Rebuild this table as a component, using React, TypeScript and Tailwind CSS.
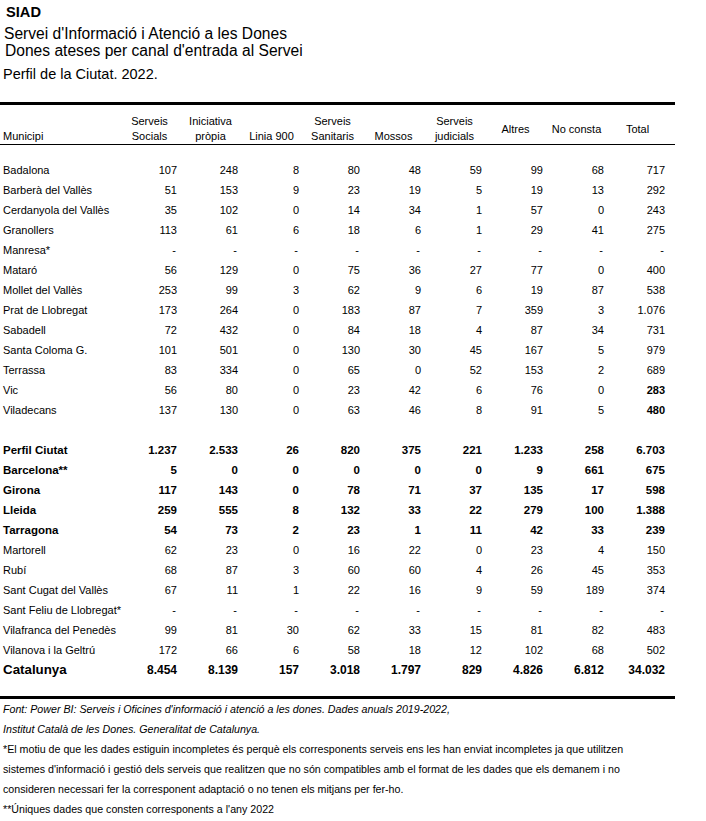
import React from "react";

type Row = { name: string; v: string[]; bold?: boolean; boldTotal?: boolean };

const top: Row[] = [
  { name: "Badalona", v: ["107", "248", "8", "80", "48", "59", "99", "68", "717"] },
  { name: "Barberà del Vallès", v: ["51", "153", "9", "23", "19", "5", "19", "13", "292"] },
  { name: "Cerdanyola del Vallès", v: ["35", "102", "0", "14", "34", "1", "57", "0", "243"] },
  { name: "Granollers", v: ["113", "61", "6", "18", "6", "1", "29", "41", "275"] },
  { name: "Manresa*", v: ["-", "-", "-", "-", "-", "-", "-", "-", "-"] },
  { name: "Mataró", v: ["56", "129", "0", "75", "36", "27", "77", "0", "400"] },
  { name: "Mollet del Vallès", v: ["253", "99", "3", "62", "9", "6", "19", "87", "538"] },
  { name: "Prat de Llobregat", v: ["173", "264", "0", "183", "87", "7", "359", "3", "1.076"] },
  { name: "Sabadell", v: ["72", "432", "0", "84", "18", "4", "87", "34", "731"] },
  { name: "Santa Coloma G.", v: ["101", "501", "0", "130", "30", "45", "167", "5", "979"] },
  { name: "Terrassa", v: ["83", "334", "0", "65", "0", "52", "153", "2", "689"] },
  { name: "Vic", v: ["56", "80", "0", "23", "42", "6", "76", "0", "283"], boldTotal: true },
  { name: "Viladecans", v: ["137", "130", "0", "63", "46", "8", "91", "5", "480"], boldTotal: true },
];

const bottom: Row[] = [
  { name: "Perfil Ciutat", v: ["1.237", "2.533", "26", "820", "375", "221", "1.233", "258", "6.703"], bold: true },
  { name: "Barcelona**", v: ["5", "0", "0", "0", "0", "0", "9", "661", "675"], bold: true },
  { name: "Girona", v: ["117", "143", "0", "78", "71", "37", "135", "17", "598"], bold: true },
  { name: "Lleida", v: ["259", "555", "8", "132", "33", "22", "279", "100", "1.388"], bold: true },
  { name: "Tarragona", v: ["54", "73", "2", "23", "1", "11", "42", "33", "239"], bold: true },
  { name: "Martorell", v: ["62", "23", "0", "16", "22", "0", "23", "4", "150"] },
  { name: "Rubí", v: ["68", "87", "3", "60", "60", "4", "26", "45", "353"] },
  { name: "Sant Cugat del Vallès", v: ["67", "11", "1", "22", "16", "9", "59", "189", "374"] },
  { name: "Sant Feliu de Llobregat*", v: ["-", "-", "-", "-", "-", "-", "-", "-", "-"] },
  { name: "Vilafranca del Penedès", v: ["99", "81", "30", "62", "33", "15", "81", "82", "483"] },
  { name: "Vilanova i la Geltrú", v: ["172", "66", "6", "58", "18", "12", "102", "68", "502"] },
];

const catalunya = ["8.454", "8.139", "157", "3.018", "1.797", "829", "4.826", "6.812", "34.032"];

const GRID = "grid grid-cols-[117px_repeat(9,61px)]";

function DataRow({ r }: { r: Row }) {
  return (
    <div className={`${GRID} h-[20px] leading-[20px] ${r.bold ? "font-bold text-[11.5px]" : "text-[11px]"}`}>
      <div className="pl-[3px] whitespace-nowrap">{r.name}</div>
      {r.v.map((x, i) => (
        <div
          key={i}
          className={`text-right ${x === "-" ? "pr-[2px]" : "pr-[1px]"} ${r.boldTotal && i === 8 ? "font-bold" : ""}`}
        >
          {x}
        </div>
      ))}
    </div>
  );
}

function H({ l1, l2, align }: { l1?: string; l2: string; align: "end" | "center" }) {
  return (
    <div
      className={`flex flex-col h-[30px] text-center leading-[15px] pl-[4px] ${
        align === "end" ? "justify-end" : "justify-center"
      }`}
    >
      {l1 && <div>{l1}</div>}
      <div>{l2}</div>
    </div>
  );
}

export default function App() {
  return (
    <div className="bg-white text-black w-[706px] h-[821px] overflow-hidden font-['Liberation_Sans',Arial,sans-serif]">
      <div className="pt-[2px]">
        <div className="pl-[6px] font-bold text-[14.67px] leading-[20px]">SIAD</div>
        <div className="mt-[3px] pl-[4px] text-[15.6px] leading-[17px]">Servei d'Informació i Atenció a les Dones</div>
        <div className="pl-[5px] text-[15.6px] leading-[17px]">Dones ateses per canal d'entrada al Servei</div>
        <div className="mt-[5px] pl-[3px] text-[14.5px] leading-[20px]">Perfil de la Ciutat. 2022.</div>
      </div>

      <div className="mt-[18px] w-[675px]">
        <div className="h-[3px] bg-black" />
        <div className={`${GRID} pt-[9px] text-[11px] pb-0`}>
          <div className="flex flex-col justify-end h-[30px] leading-[15px] pl-[3px]">Municipi</div>
          <H l1="Serveis" l2="Socials" align="end" />
          <H l1="Iniciativa" l2="pròpia" align="end" />
          <H l2="Linia 900" align="end" />
          <H l1="Serveis" l2="Sanitaris" align="end" />
          <H l2="Mossos" align="end" />
          <H l1="Serveis" l2="judicials" align="end" />
          <H l2="Altres" align="center" />
          <H l2="No consta" align="center" />
          <H l2="Total" align="center" />
        </div>
        <div className="h-[1px] bg-black" />
        <div className="h-[15px]" />
        {top.map((r) => (
          <DataRow key={r.name} r={r} />
        ))}
        <div className="h-[20px]" />
        {bottom.map((r) => (
          <DataRow key={r.name} r={r} />
        ))}
        <div className={`${GRID} h-[20px] leading-[20px] font-bold`}>
          <div className="pl-[3px] text-[13.33px] whitespace-nowrap">Catalunya</div>
          {catalunya.map((x, i) => (
            <div key={i} className="text-right pr-[1px] text-[12px]">
              {x}
            </div>
          ))}
        </div>
        <div className="h-[16px]" />
        <div className="h-[3px] bg-black" />
      </div>

      <div className="pl-[3px] text-[10.67px] leading-[20px] whitespace-nowrap font-['Liberation_Sans_Narrow','Arial_Narrow',sans-serif]">
        <div className="italic">
          Font: Power BI: Serveis i Oficines d'informació i atenció a les dones. Dades anuals 2019-2022,
        </div>
        <div className="italic">Institut Català de les Dones. Generalitat de Catalunya.</div>
        <div>
          *El motiu de que les dades estiguin incompletes és perquè els corresponents serveis ens les han enviat
          incompletes ja que utilitzen
        </div>
        <div>
          sistemes d'informació i gestió dels serveis que realitzen que no són compatibles amb el format de les dades
          que els demanem i no
        </div>
        <div>consideren necessari fer la corresponent adaptació o no tenen els mitjans per fer-ho.</div>
        <div>**Úniques dades que consten corresponents a l'any 2022</div>
      </div>
    </div>
  );
}
